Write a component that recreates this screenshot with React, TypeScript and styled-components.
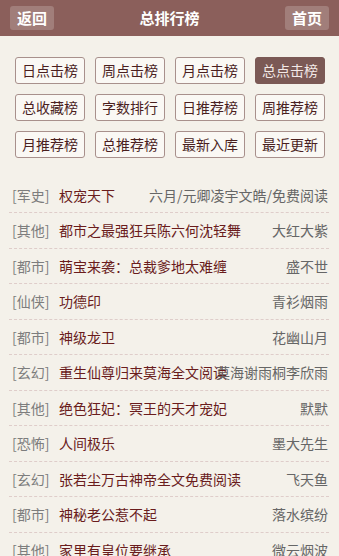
import React from 'react';
import styled, { createGlobalStyle } from 'styled-components';

const GlobalStyle = createGlobalStyle`
  body {
    margin: 0;
    background: #f4f1ea;
    font-family: "Noto Sans CJK SC", "Noto Sans", sans-serif;
  }
`;

const Header = styled.div`
  height: 36px;
  background: #8b5f5b;
  display: flex;
  align-items: center;
  justify-content: space-between;
  padding: 0 10px;
`;

const HeadButton = styled.div`
  height: 24px;
  width: 44px;
  border-radius: 3px;
  background: #a17e7a;
  color: #fff;
  font-size: 15px;
  font-weight: bold;
  line-height: 24px;
  text-align: center;
`;

const Title = styled.div`
  color: #fff;
  font-size: 15px;
  font-weight: bold;
  line-height: 36px;
`;

const Tabs = styled.div`
  display: grid;
  grid-template-columns: repeat(4, 70px);
  column-gap: 10px;
  row-gap: 10px;
  padding: 21px 14px 0 15px;
`;

const Tab = styled.div<{ $active?: boolean }>`
  box-sizing: border-box;
  height: 27px;
  border: 1px solid ${(p) => (p.$active ? '#7b5955' : '#a8908c')};
  border-radius: 3px;
  background: ${(p) => (p.$active ? '#7b5955' : '#faf8f4')};
  color: ${(p) => (p.$active ? '#f3e9e7' : '#4a1f1f')};
  font-size: 14px;
  line-height: 25px;
  text-align: center;
`;

const List = styled.div`
  padding: 19.5px 10px 0 9px;
`;

const Row = styled.div`
  display: flex;
  align-items: center;
  height: 34.5px;
  border-bottom: 1px dashed #dfcdca;
  padding: 0 1px 0 3px;
  font-size: 14px;
  white-space: nowrap;
`;

const Category = styled.span`
  flex: 0 0 47px;
  color: #7d7d7d;
`;

const BookName = styled.span`
  flex: 1;
  min-width: 0;
  color: #6a1c1c;
`;

const Author = styled.span`
  flex-shrink: 0;
  color: #666;
`;

const tabs = [
  '日点击榜', '周点击榜', '月点击榜', '总点击榜',
  '总收藏榜', '字数排行', '日推荐榜', '周推荐榜',
  '月推荐榜', '总推荐榜', '最新入库', '最近更新',
];

const books = [
  ['军史', '权宠天下', '六月/元卿凌宇文皓/免费阅读'],
  ['其他', '都市之最强狂兵陈六何沈轻舞', '大红大紫'],
  ['都市', '萌宝来袭：总裁爹地太难缠', '盛不世'],
  ['仙侠', '功德印', '青衫烟雨'],
  ['都市', '神级龙卫', '花幽山月'],
  ['玄幻', '重生仙尊归来莫海全文阅读', '莫海谢雨桐李欣雨'],
  ['其他', '绝色狂妃：冥王的天才宠妃', '默默'],
  ['恐怖', '人间极乐', '墨大先生'],
  ['玄幻', '张若尘万古神帝全文免费阅读', '飞天鱼'],
  ['都市', '神秘老公惹不起', '落水缤纷'],
  ['其他', '家里有皇位要继承', '微云烟波'],
];

export default function App() {
  return (
    <>
      <GlobalStyle />
      <Header>
        <HeadButton>返回</HeadButton>
        <Title>总排行榜</Title>
        <HeadButton>首页</HeadButton>
      </Header>
      <Tabs>
        {tabs.map((t) => (
          <Tab key={t} $active={t === '总点击榜'}>{t}</Tab>
        ))}
      </Tabs>
      <List>
        {books.map(([cat, name, author]) => (
          <Row key={name}>
            <Category>[{cat}]</Category>
            <BookName>{name}</BookName>
            <Author>{author}</Author>
          </Row>
        ))}
      </List>
    </>
  );
}
